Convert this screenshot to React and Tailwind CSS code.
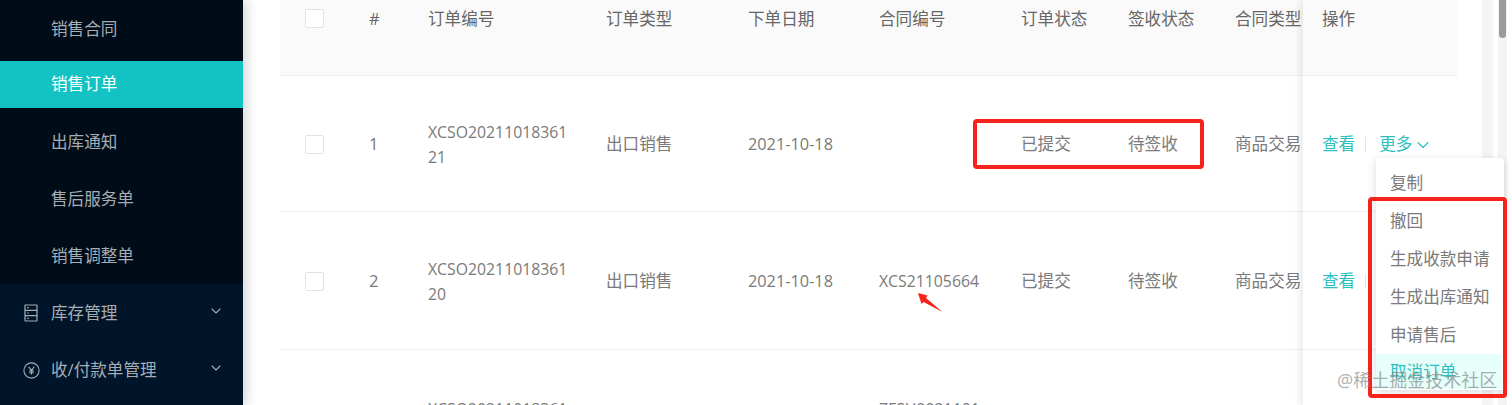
import React from 'react';
import { ChevronDown } from 'lucide-react';

const font = "font-['Open_Sans','Noto_Sans_CJK_SC',sans-serif]";

const subItems = [
  { label: '销售订单', active: true },
  { label: '出库通知' },
  { label: '售后服务单' },
  { label: '销售调整单' },
];

const columns = [
  { key: 'check', width: 'w-[68px]' },
  { key: 'no', width: 'w-[80px]' },
  { key: 'code', width: 'w-[178px]' },
  { key: 'type', width: 'w-[142px]' },
  { key: 'date', width: 'w-[131px]' },
  { key: 'contract', width: 'w-[142px]' },
  { key: 'status', width: 'w-[107px]' },
  { key: 'sign', width: 'w-[107px]' },
  { key: 'ctype', width: 'w-[69px]' },
];

const rows = [
  { no: '1', code: ['XCSO20211018361', '21'], contract: '', height: 'h-[136px]' },
  { no: '2', code: ['XCSO20211018361', '20'], contract: 'XCS21105664', height: 'h-[138px]' },
];

const menuItems = ['撤回', '生成收款申请', '生成出库通知', '申请售后'];

const StockIcon = () => (
  <svg width="14" height="18" viewBox="0 0 14 18" fill="none" stroke="currentColor" strokeWidth="1.2">
    <rect x="1" y="1" width="12" height="16" rx="0.5" />
    <path d="M1 6.3h12M1 11.6h12M3.2 3.7h1.6M3.2 9h1.6M3.2 14.3h1.6" />
  </svg>
);

const YenIcon = () => (
  <svg width="17" height="17" viewBox="0 0 17 17" fill="none" stroke="currentColor" strokeWidth="1.1">
    <circle cx="8.5" cy="8.5" r="7.6" />
    <path d="M5.8 4.8l2.7 3.6 2.7-3.6M8.5 8.4v4M6.2 8.9h4.6M6.2 10.8h4.6" />
  </svg>
);

const Checkbox = () => (
  <div className="w-[19px] h-[19px] rounded-[2px] border border-[#e2e2e2] bg-white" />
);

const Sidebar = () => (
  <aside className="relative z-10 w-[243px] h-full shrink-0 bg-[#001529] text-[16.6px] text-[#a6adb4] shadow-[4px_0_10px_rgba(0,21,41,0.16)]">
    <div className="bg-[#000c17] h-[284px]">
      <div className="h-[58px] mb-[3px] flex items-center pl-[51px]">销售合同</div>
      {subItems.map((item) => (
        <div
          key={item.label}
          className={
            item.active
              ? 'h-[47px] mb-[10px] flex items-center pl-[51px] bg-[#13c2c2] text-white'
              : 'h-[48px] mb-[9px] flex items-center pl-[51px]'
          }
        >
          {item.label}
        </div>
      ))}
    </div>
    <div className="h-[58px] flex items-center pl-[24px] pr-[19px]">
      <span className="w-[27px]"><StockIcon /></span>
      <span className="flex-1">库存管理</span>
      <ChevronDown size={16} strokeWidth={1.6} className="-mt-[4px]" />
    </div>
    <div className="h-[56px] flex items-center pl-[23px] pr-[19px]">
      <span className="w-[28px]"><YenIcon /></span>
      <span className="flex-1">收/付款单管理</span>
      <ChevronDown size={16} strokeWidth={1.6} className="-mt-[4px]" />
    </div>
  </aside>
);

const Table = () => (
  <div className="relative w-[1177px] ml-[37px] text-[#7a7a7a] text-[16.6px]">
    {/* Header */}
    <div className="flex h-[76px] bg-[#fafafa] border-b border-[#efefef] text-[#666]">
      <div className={`${columns[0].width} pl-[25px] pt-[9px]`}><Checkbox /></div>
      <div className={`${columns[1].width} pl-[21px] pt-[7px]`}>#</div>
      <div className={`${columns[2].width} pt-[7px]`}>订单编号</div>
      <div className={`${columns[3].width} pt-[7px]`}>订单类型</div>
      <div className={`${columns[4].width} pt-[7px]`}>下单日期</div>
      <div className={`${columns[5].width} pt-[7px]`}>合同编号</div>
      <div className={`${columns[6].width} pt-[7px]`}>订单状态</div>
      <div className={`${columns[7].width} pt-[7px]`}>签收状态</div>
      <div className={`${columns[8].width} pt-[7px] whitespace-nowrap`}>合同类型</div>
    </div>
    {/* Rows */}
    {rows.map((row) => (
      <div key={row.no} className={`flex items-center pt-[2px] ${row.height} border-b border-[#efefef]`}>
        <div className={`${columns[0].width} pl-[25px]`}><Checkbox /></div>
        <div className={`${columns[1].width} pl-[21px]`}>{row.no}</div>
        <div className={`${columns[2].width} text-[15.8px] leading-[25px]`}>
          <div>{row.code[0]}</div>
          <div>{row.code[1]}</div>
        </div>
        <div className={columns[3].width}>出口销售</div>
        <div className={`${columns[4].width} text-[16.3px]`}>2021-10-18</div>
        <div className={`${columns[5].width} text-[15.8px]`}>{row.contract}</div>
        <div className={columns[6].width}>已提交</div>
        <div className={columns[7].width}>待签收</div>
        <div className={`${columns[8].width} whitespace-nowrap`}>商品交易</div>
      </div>
    ))}
    {/* Third row is cut off by the window */}
    <div className="flex pt-[48px] text-[15.8px]">
      <div className="w-[148px]" />
      <div className="w-[451px]">XCSO20211018361</div>
      <div>ZFSH2021101</div>
    </div>
  </div>
);

const ActionColumn = () => (
  <div className="absolute top-0 left-[1303px] w-[154px] h-[405px] bg-white shadow-[-4px_0_6px_rgba(0,0,0,0.07)] text-[16.6px] text-[#666]">
    <div className="h-[76px] bg-[#fafafa] border-b border-[#efefef] pl-[19px] pt-[7px]">操作</div>
    <div className="h-[136px] pt-[2px] border-b border-[#efefef] flex items-center pl-[19px] text-[#2bbfbf]">
      <span>查看</span>
      <span className="w-px h-[15px] bg-[#e4e4e4] ml-[10px] mr-[13px]" />
      <span>更多</span>
      <ChevronDown size={20} strokeWidth={1.3} className="ml-[1px]" />
    </div>
    <div className="h-[138px] pt-[2px] border-b border-[#efefef] flex items-center pl-[19px] text-[#2bbfbf]">
      <span>查看</span>
      <span className="w-px h-[15px] bg-[#e4e4e4] ml-[10px]" />
    </div>
  </div>
);

const Dropdown = () => (
  <div className="absolute z-20 top-[158px] left-[1376px] w-[128px] h-[232px] bg-white rounded-[3px] shadow-[0_2px_8px_rgba(0,0,0,0.15)] pt-[7px] text-[16.6px] text-[#7a7a7a]">
    <div className="h-[37px] flex items-center pl-[14px]">复制</div>
    {menuItems.map((item) => (
      <div key={item} className="h-[38px] flex items-center pl-[14px]">{item}</div>
    ))}
    <div className="h-[35px] w-[126px] flex items-center pl-[14px] pt-[2px] bg-[#e6fffb] text-[#2bbfbf]">取消订单</div>
  </div>
);

export default function App() {
  return (
    <div className={`relative w-[1512px] h-[405px] overflow-hidden bg-white flex ${font}`}>
      <Sidebar />
      <Table />
      <ActionColumn />
      {/* Page scrollbar */}
      <div className="absolute top-0 left-[1482px] w-[11px] h-[405px] bg-[#f5f5f7]" />
      <div className="absolute top-0 left-[1498px] w-[9px] h-[405px] bg-[#f4f4f4]">
        <div className="w-[7px] h-[38px] ml-[1px] rounded-b bg-[#9a9a9a]" />
      </div>
      <Dropdown />
      {/* Red annotation boxes */}
      <div className="absolute z-30 top-[119px] left-[973px] w-[231px] h-[50px] rounded-[4px] border-4 border-[#f5231a]" />
      <div className="absolute z-30 top-[197px] left-[1368px] w-[139px] h-[201px] rounded-[4px] border-4 border-[#f5231a]" />
      <svg className="absolute z-30 top-[292px] left-[916px]" width="30" height="24" viewBox="0 0 30 24" fill="#f5231a">
        <path d="M2 1L11.5 3.5L10 6L26.5 20L7.5 10L5.5 12Z" />
      </svg>
      {/* Watermark */}
      <div className="absolute z-40 top-[368px] left-[1337px] text-[18px] leading-[24px] text-[#8a8a8a]/70 whitespace-nowrap">@稀土掘金技术社区</div>
    </div>
  );
}
